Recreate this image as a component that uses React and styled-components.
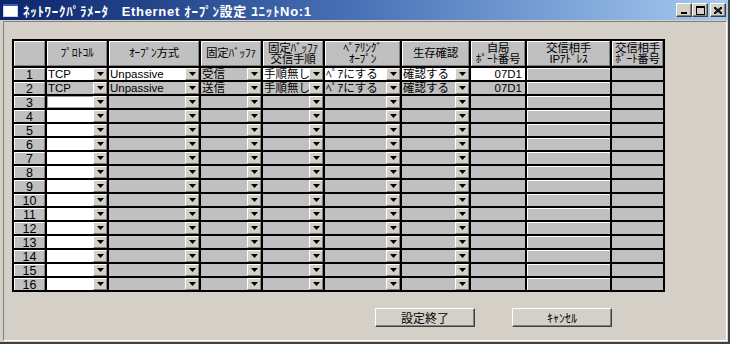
import React from "react";
import styled, { createGlobalStyle } from "styled-components";

const Global = createGlobalStyle`
  html, body { margin: 0; padding: 0; background: #d4d0c8; }
  * { box-sizing: border-box; }
`;

const FONT = `"Liberation Sans", "Noto Sans CJK JP", sans-serif`;

const Window = styled.div`
  width: 730px;
  height: 344px;
  background: #d4d0c8;
  display: flex;
  flex-direction: column;
  font-family: ${FONT};
  font-size: 12px;
  color: #000;
  border-right: 2px solid #404040;
  border-bottom: 2px solid #404040;
  overflow: hidden;
`;

const TitleBar = styled.div`
  height: 20px;
  flex: none;
  display: flex;
  align-items: center;
  padding: 0 2px 0 3px;
  background: linear-gradient(to right, #0a246a 0%, #4a74b8 50%, #a6caf0 100%);
`;

const TitleText = styled.div`
  color: #fff;
  font-weight: bold;
  font-size: 13px;
  white-space: pre;
  margin-left: 5px;
  flex: 1;
  letter-spacing: 0.7px;
`;

const CaptionButtons = styled.div`
  display: flex;
  align-items: center;
`;

const CapBtn = styled.div`
  width: 16px;
  height: 14px;
  background: #d4d0c8;
  border-top: 1px solid #fff;
  border-left: 1px solid #fff;
  border-right: 1px solid #404040;
  border-bottom: 1px solid #404040;
  box-shadow: inset -1px -1px 0 #808080;
  display: flex;
  align-items: center;
  justify-content: center;
  margin-left: ${(p) => (p.$gap ? "2px" : "0")};
`;

const Client = styled.div`
  flex: 1;
  margin: 1px 1px 1px 3px;
  border-top: 1px solid #808080;
  border-left: 1px solid #808080;
  border-right: 1px solid #fff;
  border-bottom: 1px solid #fff;
  padding: 17px 0 0 8px;
  display: flex;
  flex-direction: column;
`;

const Grid = styled.div`
  display: grid;
  grid-template-columns: 31px 60px 90px 60px 60px 75px 67px 54px 83px 51px;
  grid-template-rows: 25px repeat(16, 12px);
  gap: 2px;
  padding: 2px;
  background: #000;
  width: max-content;
`;

const HeaderCell = styled.div`
  background: #c0c0c0;
  border-top: 1px solid #fff;
  border-left: 1px solid #fff;
  border-right: 1px solid #808080;
  border-bottom: 1px solid #808080;
  display: flex;
  align-items: center;
  justify-content: center;
  text-align: center;
  line-height: 11px;
  font-size: 11.5px;
  letter-spacing: -0.3px;
  white-space: pre;
`;

const RowNum = styled.div`
  background: #c0c0c0;
  border-top: 1px solid #fff;
  border-left: 1px solid #fff;
  border-right: 1px solid #808080;
  display: flex;
  align-items: center;
  justify-content: center;
  line-height: 12px;
  font-size: 12.5px;
`;

const Cell = styled.div`
  background: ${(p) => (p.$white ? "#fff" : "#c0c0c0")};
  display: flex;
  align-items: stretch;
  overflow: hidden;
  line-height: 12px;
  ${(p) => p.$raised && `box-shadow: inset 1px 1px 0 #fff;`}
  ${(p) => p.$focus && `box-shadow: inset 0 0 0 1px #a0a0a0;`}
`;

const CellText = styled.div`
  flex: 1;
  min-width: 0;
  padding-left: 1px;
  white-space: nowrap;
  overflow: hidden;
  font-size: 11.5px;
  text-align: ${(p) => p.$align || "left"};
  padding-right: ${(p) => (p.$align === "right" ? "3px" : "0")};
`;

const DropBtn = styled.div`
  width: 14px;
  flex: none;
  background: #d4d0c8;
  border-left: 1px solid #fff;
  border-top: 1px solid #fff;
  border-right: 1px solid #808080;
  border-bottom: 1px solid #808080;
  display: flex;
  align-items: center;
  justify-content: center;
`;

const ButtonRow = styled.div`
  display: flex;
  gap: 37px;
  padding-left: 363px;
  margin-top: 16px;
`;

const PushButton = styled.div`
  width: 100px;
  height: 19px;
  background: #d4d0c8;
  border-top: 1px solid #fff;
  border-left: 1px solid #fff;
  border-right: 1px solid #404040;
  border-bottom: 1px solid #404040;
  box-shadow: inset -1px -1px 0 #808080;
  display: flex;
  align-items: center;
  justify-content: center;
  font-size: 12px;
`;

const Arrow = () => (
  <svg width="7" height="4" viewBox="0 0 7 4">
    <path d="M0 0H7L3.5 4Z" fill="#000" />
  </svg>
);

const AppIcon = () => (
  <svg width="15" height="13" viewBox="0 0 15 13">
    <rect x="0.5" y="0.5" width="14" height="12" fill="#fff" stroke="#c8d4f0" />
    <rect x="0" y="0" width="15" height="2" fill="#3060c0" />
  </svg>
);

const headers = [
  "",
  "ﾌﾟﾛﾄｺﾙ",
  "ｵｰﾌﾟﾝ方式",
  "固定ﾊﾞｯﾌｧ",
  "固定ﾊﾞｯﾌｧ\n交信手順",
  "ﾍﾟｱﾘﾝｸﾞ\nｵｰﾌﾟﾝ",
  "生存確認",
  "自局\nﾎﾟｰﾄ番号",
  "交信相手\nIPｱﾄﾞﾚｽ",
  "交信相手\nﾎﾟｰﾄ番号",
];

const columns = [
  { key: "proto", dd: true },
  { key: "open", dd: true },
  { key: "buf", dd: true },
  { key: "proc", dd: true },
  { key: "pair", dd: true },
  { key: "alive", dd: true },
  { key: "port", align: "right" },
  { key: "ip", raised: true },
  { key: "rport" },
];

const rows = Array.from({ length: 16 }, (_, i) => {
  const n = i + 1;
  if (n === 1)
    return {
      n,
      v: { proto: "TCP", open: "Unpassive", buf: "受信", proc: "手順無し", pair: "ﾍﾟｱにする", alive: "確認する", port: "07D1" },
      white: ["proto", "open", "proc", "pair", "alive", "port"],
    };
  if (n === 2)
    return {
      n,
      v: { proto: "TCP", open: "Unpassive", buf: "送信", proc: "手順無し", pair: "ﾍﾟｱにする", alive: "確認する", port: "07D1" },
      white: [],
    };
  return { n, v: {}, white: ["proto"], focus: n === 3 ? "proto" : null };
});

export default function App() {
  return (
    <>
      <Global />
      <Window>
        <TitleBar>
          <AppIcon />
          <TitleText>{"ﾈｯﾄﾜｰｸﾊﾟﾗﾒｰﾀ   Ethernet ｵｰﾌﾟﾝ設定 ﾕﾆｯﾄNo:1"}</TitleText>
          <CaptionButtons>
            <CapBtn>
              <svg width="8" height="8" viewBox="0 0 8 8">
                <rect x="1" y="6" width="6" height="2" fill="#000" />
              </svg>
            </CapBtn>
            <CapBtn>
              <svg width="9" height="9" viewBox="0 0 9 9">
                <rect x="0.5" y="0.5" width="8" height="8" fill="none" stroke="#000" />
                <rect x="0" y="0" width="9" height="2" fill="#000" />
              </svg>
            </CapBtn>
            <CapBtn $gap>
              <svg width="8" height="7" viewBox="0 0 8 7">
                <path d="M0 0L8 7M1 0L8 6M0 1L7 7M8 0L0 7M7 0L0 6M8 1L1 7" stroke="#000" strokeWidth="1" />
              </svg>
            </CapBtn>
          </CaptionButtons>
        </TitleBar>
        <Client>
          <Grid>
            {headers.map((h, i) => (
              <HeaderCell key={i}>{h}</HeaderCell>
            ))}
            {rows.map((r) => (
              <React.Fragment key={r.n}>
                <RowNum>{r.n}</RowNum>
                {columns.map((c) => (
                  <Cell
                    key={c.key}
                    $white={r.white.includes(c.key)}
                    $raised={c.raised}
                    $focus={r.focus === c.key}
                  >
                    <CellText $align={c.align}>{r.v[c.key] || ""}</CellText>
                    {c.dd && (
                      <DropBtn>
                        <Arrow />
                      </DropBtn>
                    )}
                  </Cell>
                ))}
              </React.Fragment>
            ))}
          </Grid>
          <ButtonRow>
            <PushButton>設定終了</PushButton>
            <PushButton>ｷｬﾝｾﾙ</PushButton>
          </ButtonRow>
        </Client>
      </Window>
    </>
  );
}
